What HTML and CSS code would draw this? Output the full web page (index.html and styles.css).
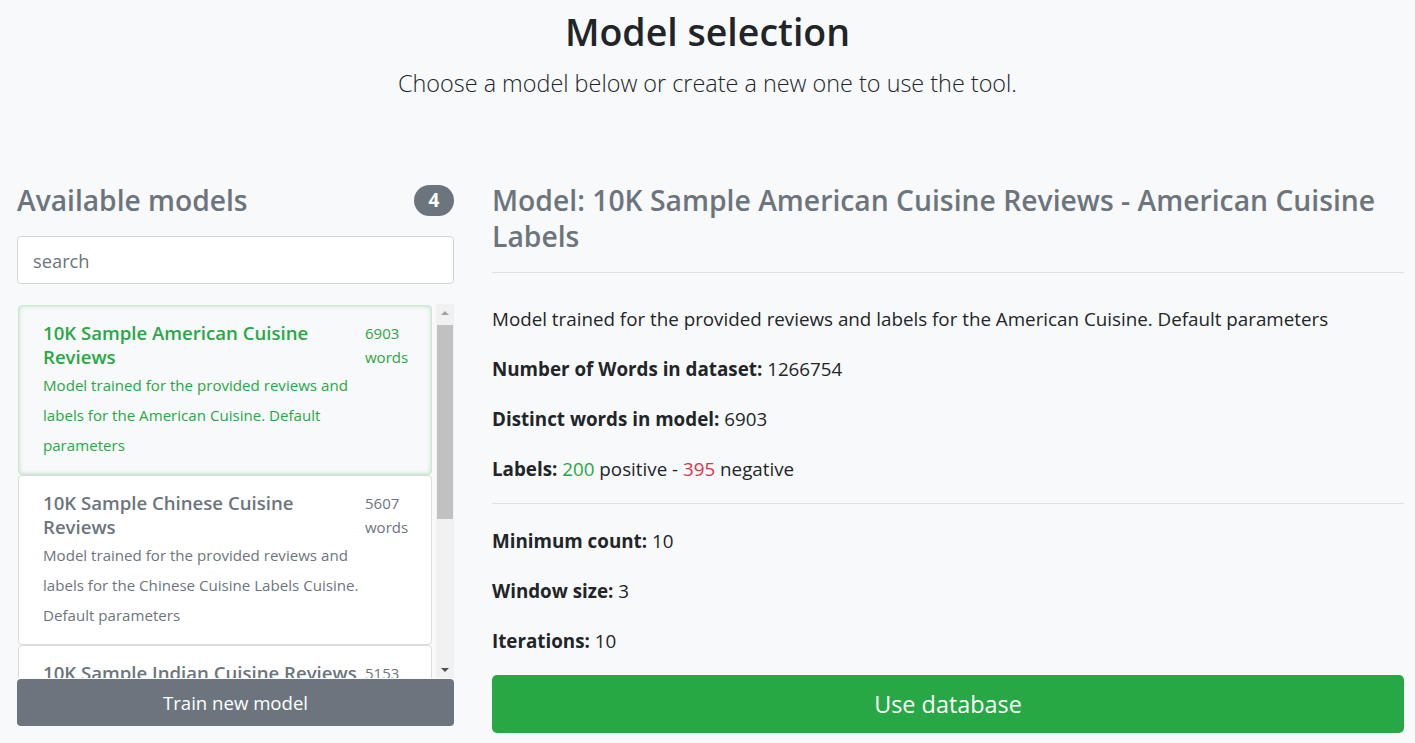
FILE: index.html
```html
<!DOCTYPE html>
<html lang="en">
<head>
<meta charset="utf-8">
<title>Model selection</title>
<link rel="stylesheet" href="styles.css">
</head>
<body>
<header class="page-header">
  <h1 class="page-title">Model selection</h1>
  <p class="lead">Choose a model below or create a new one to use the tool.</p>
</header>
<main class="layout">
  <section class="sidebar">
    <div class="sidebar-head">
      <h2 class="sidebar-title">Available models</h2>
      <span class="badge">4</span>
    </div>
    <input class="search" type="text" placeholder="search">
    <div class="list-wrap">
      <div class="list">
        <div class="item active">
          <div class="item-main">
            <div class="item-title">10K Sample American Cuisine Reviews</div>
            <div class="item-desc">Model trained for the provided reviews and labels for the American Cuisine. Default parameters</div>
          </div>
          <div class="item-count">6903 words</div>
        </div>
        <div class="item">
          <div class="item-main">
            <div class="item-title">10K Sample Chinese Cuisine Reviews</div>
            <div class="item-desc">Model trained for the provided reviews and labels for the Chinese Cuisine Labels Cuisine. Default parameters</div>
          </div>
          <div class="item-count">5607 words</div>
        </div>
        <div class="item">
          <div class="item-main">
            <div class="item-title">10K Sample Indian Cuisine Reviews</div>
            <div class="item-desc">Model trained for the provided reviews and labels for the Indian Cuisine. Default parameters</div>
          </div>
          <div class="item-count">5153 words</div>
        </div>
      </div>
      <div class="scrollbar">
        <div class="sb-arrow up"></div>
        <div class="sb-track"><div class="sb-thumb"></div></div>
        <div class="sb-arrow down"></div>
      </div>
    </div>
    <button class="btn-train">Train new model</button>
  </section>
  <section class="detail">
    <h2 class="detail-title">Model: 10K Sample American Cuisine Reviews - American Cuisine Labels</h2>
    <hr class="rule first">
    <p class="info">Model trained for the provided reviews and labels for the American Cuisine. Default parameters</p>
    <p class="info"><b>Number of Words in dataset:</b> 1266754</p>
    <p class="info"><b>Distinct words in model:</b> 6903</p>
    <p class="info"><b>Labels:</b> <span class="pos">200</span> positive - <span class="neg">395</span> negative</p>
    <hr class="rule second">
    <p class="info"><b>Minimum count:</b> 10</p>
    <p class="info"><b>Window size:</b> 3</p>
    <p class="info"><b>Iterations:</b> 10</p>
    <button class="btn-use">Use database</button>
  </section>
</main>
</body>
</html>
```
FILE: styles.css
```css
* { box-sizing: border-box; }
html, body { margin: 0; height: 100%; }
body {
  background: #f8f9fa;
  font-family: "Open Sans", "Noto Sans", sans-serif;
  color: #212529;
  overflow: hidden;
}
.page-header { text-align: center; padding-top: 12px; }
.page-title {
  margin: 0;
  font-size: 37.5px;
  line-height: 40px;
  font-weight: 600;
}
.lead {
  margin: 16px 0 0;
  font-size: 23.4px;
  line-height: 30px;
  font-weight: 300;
}
.layout {
  display: grid;
  grid-template-columns: 437px 912px;
  column-gap: 38px;
  padding: 0 11px 0 17px;
  margin-top: 84px;
}
.sidebar { display: flex; flex-direction: column; }
.sidebar-head {
  display: flex;
  justify-content: space-between;
  align-items: center;
  height: 36px;
}
.sidebar-title {
  margin: 0;
  font-size: 28.2px;
  font-weight: 600;
  color: #6c757d;
  line-height: 36px;
}
.badge {
  background: #6c757d;
  color: #fff;
  font-weight: 700;
  font-size: 19px;
  width: 40px;
  height: 31px;
  border-radius: 16px;
  display: flex;
  align-items: center;
  justify-content: center;
}
.search {
  margin-top: 18px;
  height: 48px;
  border: 1px solid #ced4da;
  border-radius: 4px;
  padding: 0 15px;
  font: inherit;
  font-size: 18.3px;
  background: #fff;
  color: #495057;
}
.search::placeholder { color: #6c757d; }
.list-wrap {
  margin-top: 20px;
  height: 374px;
  display: flex;
}
.list {
  flex: 1;
  overflow: hidden;
  padding: 1px 4px 0 1px;
}
.item {
  display: flex;
  gap: 4px;
  background: #fff;
  border: 1px solid #dcdcdc;
  border-radius: 4px;
  padding: 15px 14px 13px 24px;
  color: #6c757d;
  height: 170px;
}
.item.active {
  background: #f8f9fa;
  border-color: #cde6d3;
  box-shadow: inset 0 0 4px rgba(40,167,69,.3);
  color: #28a745;
}
.item-main { width: 318px; flex: none; }
.item-title {
  font-size: 18.6px;
  font-weight: 600;
  line-height: 24px;
}
.item-desc {
  font-size: 15.1px;
  line-height: 30px;
  padding-top: 1px;
}
.item-count {
  font-size: 15px;
  line-height: 24px;
}
.scrollbar {
  width: 18px;
  background: #f1f1f1;
  display: flex;
  flex-direction: column;
}
.sb-arrow { height: 17px; display: flex; justify-content: center; align-items: center; }
.sb-arrow.up::before {
  content: "";
  border-left: 4px solid transparent;
  border-right: 4px solid transparent;
  border-bottom: 4px solid #a3a3a3;
}
.sb-arrow.down::before {
  content: "";
  border-left: 4px solid transparent;
  border-right: 4px solid transparent;
  border-top: 4px solid #505050;
}
.sb-track { flex: 1; padding: 4px 1px 0; }
.sb-thumb { height: 194px; background: #c1c1c1; }
.btn-train {
  height: 47px;
  margin-top: 1px;
  border: none;
  border-radius: 4px;
  background: #6c757d;
  color: #fff;
  font: inherit;
  font-size: 18.6px;
}
.detail-title {
  margin: 0;
  font-size: 28.3px;
  font-weight: 600;
  line-height: 36px;
  color: #6c757d;
}
.rule {
  border: 0;
  border-top: 1px solid #dfe1e3;
  margin: 0;
}
.rule.first { margin-top: 18px; margin-bottom: 32px; }
.rule.second { margin-top: -2px; margin-bottom: 23px; }
.info {
  margin: 0 0 22px;
  font-size: 18.8px;
  line-height: 28px;
}
.info b { font-weight: 700; }
.pos { color: #28a745; }
.neg { color: #dc3545; }
.btn-use {
  display: block;
  width: 100%;
  height: 58px;
  margin-top: -2px;
  border: none;
  border-radius: 5px;
  background: #28a745;
  color: #fff;
  font: inherit;
  font-size: 23.4px;
}
```
